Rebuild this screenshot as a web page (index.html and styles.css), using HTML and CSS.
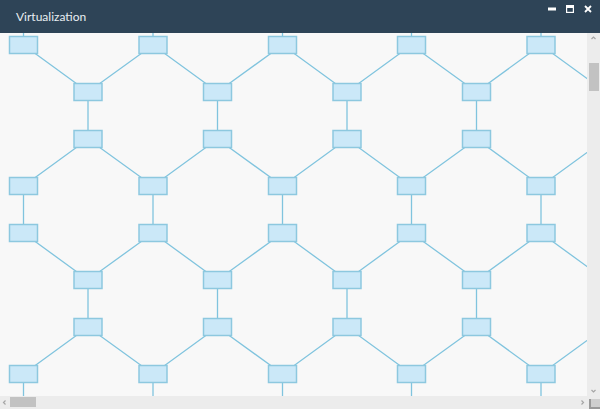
FILE: index.html
```html
<!DOCTYPE html>
<html lang="en">
<head>
<meta charset="utf-8">
<title>Virtualization</title>
<link rel="stylesheet" href="styles.css">
</head>
<body>
<div class="window">
  <header class="titlebar">
    <span class="title">Virtualization</span>
    <div class="controls">
      <svg class="ctl" viewBox="0 0 10 10" width="10" height="10"><rect x="1" y="3.5" width="8" height="3" fill="#fff"/></svg>
      <svg class="ctl" viewBox="0 0 10 10" width="10" height="10"><rect x="1.6" y="1.6" width="6.8" height="6.8" fill="none" stroke="#fff" stroke-width="1.2"/><rect x="1" y="1" width="8" height="3" fill="#fff"/></svg>
      <svg class="ctl" viewBox="0 0 10 10" width="10" height="10"><path d="M2 2L8 8M8 2L2 8" stroke="#fff" stroke-width="1.8" fill="none"/></svg>
    </div>
  </header>
  <div class="main">
    <div class="viewport">
      <svg class="canvas" viewBox="0 33 587 363" width="587" height="363">
        <g class="edges">
          <path d="M23.5 -2V45M153 -2V45M282.5 -2V45M411.5 -2V45M541 -2V45
                   M23.5 186V233M153 186V233M282.5 186V233M411.5 186V233M541 186V233
                   M23.5 374V421M153 374V421M282.5 374V421M411.5 374V421M541 374V421
                   M88 92V139M217.5 92V139M347 92V139M476.5 92V139M605.5 92V139
                   M88 280V327M217.5 280V327M347 280V327M476.5 280V327M605.5 280V327"/>
          <polyline points="23.5,45 88,92 153,45 217.5,92 282.5,45 347,92 411.5,45 476.5,92 541,45 605.5,92 670,45"/>
          <polyline points="23.5,186 88,139 153,186 217.5,139 282.5,186 347,139 411.5,186 476.5,139 541,186 605.5,139 670,186"/>
          <polyline points="23.5,233 88,280 153,233 217.5,280 282.5,233 347,280 411.5,233 476.5,280 541,233 605.5,280 670,233"/>
          <polyline points="23.5,374 88,327 153,374 217.5,327 282.5,374 347,327 411.5,374 476.5,327 541,374 605.5,327 670,374"/>
        </g>
        <g class="nodes">
          <rect x="9.5" y="36.5" width="28" height="17"/><rect x="139" y="36.5" width="28" height="17"/><rect x="268.5" y="36.5" width="28" height="17"/><rect x="397.5" y="36.5" width="28" height="17"/><rect x="527" y="36.5" width="28" height="17"/>
          <rect x="74" y="83.5" width="28" height="17"/><rect x="203.5" y="83.5" width="28" height="17"/><rect x="333" y="83.5" width="28" height="17"/><rect x="462.5" y="83.5" width="28" height="17"/>
          <rect x="74" y="130.5" width="28" height="17"/><rect x="203.5" y="130.5" width="28" height="17"/><rect x="333" y="130.5" width="28" height="17"/><rect x="462.5" y="130.5" width="28" height="17"/>
          <rect x="9.5" y="177.5" width="28" height="17"/><rect x="139" y="177.5" width="28" height="17"/><rect x="268.5" y="177.5" width="28" height="17"/><rect x="397.5" y="177.5" width="28" height="17"/><rect x="527" y="177.5" width="28" height="17"/>
          <rect x="9.5" y="224.5" width="28" height="17"/><rect x="139" y="224.5" width="28" height="17"/><rect x="268.5" y="224.5" width="28" height="17"/><rect x="397.5" y="224.5" width="28" height="17"/><rect x="527" y="224.5" width="28" height="17"/>
          <rect x="74" y="271.5" width="28" height="17"/><rect x="203.5" y="271.5" width="28" height="17"/><rect x="333" y="271.5" width="28" height="17"/><rect x="462.5" y="271.5" width="28" height="17"/>
          <rect x="74" y="318.5" width="28" height="17"/><rect x="203.5" y="318.5" width="28" height="17"/><rect x="333" y="318.5" width="28" height="17"/><rect x="462.5" y="318.5" width="28" height="17"/>
          <rect x="9.5" y="365.5" width="28" height="17"/><rect x="139" y="365.5" width="28" height="17"/><rect x="268.5" y="365.5" width="28" height="17"/><rect x="397.5" y="365.5" width="28" height="17"/><rect x="527" y="365.5" width="28" height="17"/>
        </g>
      </svg>
    </div>
    <div class="vscroll">
      <svg class="arrow" viewBox="0 0 13 9" width="13" height="9"><path d="M4.5 6L6.5 4L8.5 6" fill="none" stroke="#a6a6a6" stroke-width="1.2"/></svg>
      <div class="vthumb"></div>
      <div class="spacer"></div>
      <svg class="arrow" viewBox="0 0 13 9" width="13" height="9"><path d="M4.5 3L6.5 5L8.5 3" fill="none" stroke="#a6a6a6" stroke-width="1.2"/></svg>
    </div>
  </div>
  <div class="hbar">
    <div class="hscroll">
      <svg class="harrow" viewBox="0 0 9 13" width="9" height="13"><path d="M5.5 4.5L3.5 6.5L5.5 8.5" fill="none" stroke="#a6a6a6" stroke-width="1.2"/></svg>
      <div class="hthumb"></div>
      <div class="spacer"></div>
      <svg class="harrow" viewBox="0 0 9 13" width="9" height="13"><path d="M3.5 4.5L5.5 6.5L3.5 8.5" fill="none" stroke="#a6a6a6" stroke-width="1.2"/></svg>
    </div>
    <div class="corner">
      <div class="grip"></div>
    </div>
  </div>
</div>
</body>
</html>
```

FILE: styles.css
```css
* { box-sizing: border-box; }
html, body { margin: 0; padding: 0; background: #f8f8f8; }
body { width: 600px; height: 409px; overflow: hidden; }

.window {
  width: 600px;
  height: 409px;
  display: flex;
  flex-direction: column;
  background: #f8f8f8;
}

.titlebar {
  height: 33px;
  flex: 0 0 33px;
  background: #2e4457;
  display: flex;
  align-items: center;
  padding-left: 16px;
}

.title {
  font-family: Lato, "Open Sans", sans-serif;
  font-size: 12px;
  font-weight: 400;
  color: #e9eef2;
  margin-top: -1px;
}

.controls {
  margin-left: auto;
  align-self: flex-start;
  display: flex;
  gap: 8px;
  padding-top: 4px;
  padding-right: 7px;
}

.ctl { display: block; }

.main {
  flex: 1;
  display: flex;
  min-height: 0;
}

.viewport {
  width: 587px;
  height: 363px;
  overflow: hidden;
}

.canvas { display: block; }

.edges path, .edges polyline {
  fill: none;
  stroke: #80c4de;
  stroke-width: 1.3;
}

.nodes rect {
  fill: #cbe8f8;
  stroke: #8dc8df;
  stroke-width: 1.5;
}

.vscroll {
  width: 13px;
  flex: 0 0 13px;
  background: #ececec;
  display: flex;
  flex-direction: column;
  align-items: stretch;
}

.arrow { display: block; }

.vthumb {
  margin-top: 21px;
  margin-left: 2px;
  width: 10px;
  height: 28px;
  background: #c2c2c2;
}

.spacer { flex: 1; }

.hbar {
  height: 13px;
  flex: 0 0 13px;
  display: flex;
}

.hscroll {
  width: 587px;
  background: #ececec;
  display: flex;
  align-items: flex-start;
}

.harrow { display: block; }

.hthumb {
  margin-top: 1px;
  margin-left: 1px;
  width: 26px;
  height: 10px;
  background: #c2c2c2;
}

.corner {
  width: 13px;
  background: #ececec;
  display: flex;
  align-items: flex-end;
  justify-content: flex-end;
}

.grip {
  width: 11px;
  height: 10px;
  background: #cfcfcf;
  border-left: 2px solid #9a9a9a;
  border-bottom: 2px solid #9a9a9a;
}
```
